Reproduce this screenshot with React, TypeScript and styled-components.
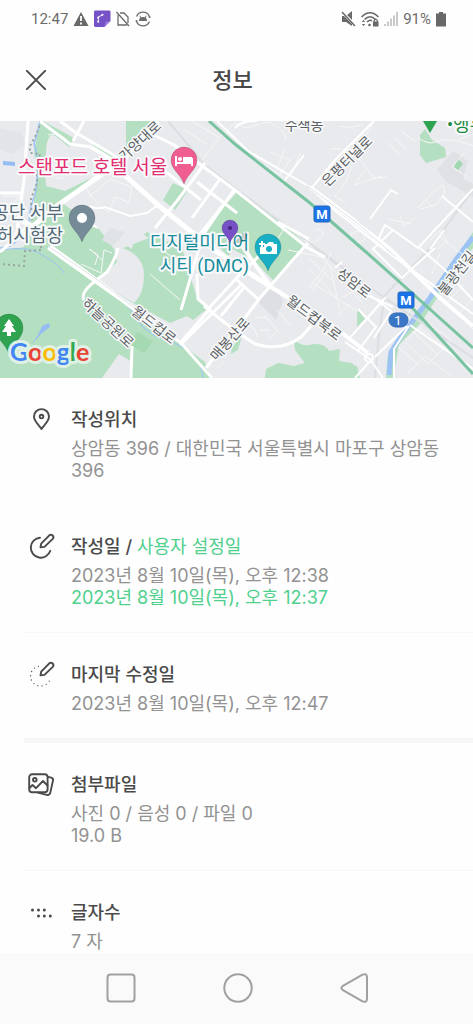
import React from "react";
import styled, { createGlobalStyle } from "styled-components";

const GlobalStyle = createGlobalStyle`
  * { box-sizing: border-box; }
  body {
    margin: 0;
    background: #fefefe;
    font-family: Inter, "Noto Sans CJK KR", sans-serif;
    color: #4a4a4a;
  }
`;

const Screen = styled.div`
  display: flex;
  flex-direction: column;
  min-height: 100vh;
`;

const StatusBar = styled.div`
  display: flex;
  align-items: center;
  justify-content: space-between;
  height: 38px;
  padding: 0 27px 0 31px;
  font: 400 15px/20px Roboto, sans-serif;
  color: #6c6c6c;
`;

const StatusGroup = styled.div<{ $gap: number }>`
  display: flex;
  align-items: center;
  gap: ${(p) => p.$gap}px;
  svg { display: block; }
`;

const TopBar = styled.header`
  display: grid;
  grid-template-columns: 48px 1fr 48px;
  align-items: center;
  height: 83px;
  padding: 0 20px 0 12px;
`;

const CloseButton = styled.button`
  display: flex;
  align-items: center;
  justify-content: center;
  width: 48px;
  height: 48px;
  padding: 0;
  border: 0;
  background: none;
`;

const Title = styled.h1`
  margin: 0;
  text-align: center;
  font-size: 22px;
  line-height: 30px;
  font-weight: 500;
  color: #484848;
`;

const MapView = styled.svg`
  display: block;
  width: 100%;
  height: 257px;
  background: #e8eaed;
`;

const Details = styled.main`
  flex: 1;
  padding-left: 24px;
`;

const Row = styled.section<{ $divider: number }>`
  display: flex;
  gap: 11px;
  padding: 30px 24px 23px 0;
  border-bottom: ${(p) => p.$divider}px solid #f7f7f7;
  &:last-child { padding-bottom: 0; }
`;

const RowIcon = styled.div`
  flex: none;
  width: 36px;
  height: 24px;
  svg { display: block; overflow: visible; }
`;

const RowTitle = styled.h2`
  margin: 0 0 6px;
  font-size: 18px;
  line-height: 24px;
  font-weight: 500;
`;

const Line = styled.p<{ $accent?: boolean }>`
  margin: 0;
  font-size: 18px;
  line-height: 22px;
  color: ${(p) => (p.$accent ? "#4fd08d" : "#929292")};
`;

const Accent = styled.span`
  font-weight: 400;
  color: #4fd08d;
`;

const NavBar = styled.nav`
  display: flex;
  justify-content: center;
  align-items: center;
  gap: 69px;
  height: 71px;
  padding-left: 2px;
  background: #fafafa;
`;

const NavButton = styled.button`
  width: 48px;
  height: 48px;
  padding: 0;
  border: 0;
  background: none;
  svg { display: block; }
`;

const RoadName = styled.text`
  font: 400 14px Roboto, "Noto Sans CJK KR", sans-serif;
  fill: #5b5f63;
  stroke: #f8f9fa;
  stroke-width: 3px;
  stroke-linejoin: round;
  paint-order: stroke;
  text-anchor: middle;
`;

const PlaceName = styled.text<{ $color: string; $size?: number }>`
  font: 400 ${(p) => p.$size ?? 18}px Roboto, "Noto Sans CJK KR", sans-serif;
  fill: ${(p) => p.$color};
  stroke: #f8f9fa;
  stroke-width: 4px;
  stroke-linejoin: round;
  paint-order: stroke;
`;

const MapLogo = styled.text`
  font: 700 25px Lato, sans-serif;
  stroke: #dff1e4;
  stroke-width: 6px;
  stroke-linejoin: round;
  paint-order: stroke;
`;

const roadNames = [
  { name: "가양대로", x: 140, y: 141, turn: -43 },
  { name: "수색동", x: 304, y: 125, turn: 0 },
  { name: "은평터널로", x: 347, y: 161, turn: -45 },
  { name: "불광천길", x: 457, y: 273, turn: -52 },
  { name: "성암로", x: 354, y: 283, turn: 38 },
  { name: "월드컵북로", x: 314, y: 318, turn: 37 },
  { name: "월드컵로", x: 154, y: 325, turn: 38 },
  { name: "하늘공원로", x: 108, y: 323, turn: 43 },
  { name: "매봉산로", x: 230, y: 339, turn: -49 },
];

function MapPin({ x, y, r, color, children }: { x: number; y: number; r: number; color: string; children?: React.ReactNode }) {
  return (
    <g transform={`translate(${x} ${y})`}>
      <path
        d={`M${-r} 0A${r} ${r} 0 1 1 ${r} 0C${r} ${r * 0.75} ${r * 0.3} ${r} 0 ${r * 1.85}C${-r * 0.3} ${r} ${-r} ${r * 0.75} ${-r} 0Z`}
        fill={color}
        stroke="#0002"
      />
      {children}
    </g>
  );
}

function LocationMap() {
  return (
    <MapView viewBox="0 121 473 257" preserveAspectRatio="xMidYMid slice" role="img" aria-label="지도">
      <g fill="#b4dfc1">
        <path d="M43 121L74 138L69 147L53 134Q47 136 46 150L45 170L46 186L65 191L91 178L62 203L97 228L132 249L133 243L147 232L182 248L190 275L197 298L207 309L193 320L187 316L170 323L133 303L97 281L182 345L205 362L210 378H0V251L24 247L32 215L37 180L34 150L41 121Z" />
        <path d="M126 121H157L130 151L115 165L110 162L126 148Z" />
        <path d="M93 145L119 158L115 163L91 148Z" />
        <path d="M173 183L188 190L175 210L163 200Z" />
        <path d="M238 191L278 220L305 243L275 282L253 260L206 235L205 228Z" />
        <path d="M206 234L217 219L240 240L228 256Z" />
        <path d="M420 135L425 129L432 140L445 148L446 157L426 163L420 155Z" />
        <path d="M265 378L266 369L278 363L294 366L312 361L323 361L357 366L360 378Z" />
        <path d="M294 340Q304 348 313 344Q325 343 329 351L340 349L339 361L352 363L358 370L340 377L310 370L295 350Z" />
        <path d="M232 347L242 336L238 350L231 354Z" />
        <path d="M357 309L365 319L357 327Z" />
        <path d="M386 378L388 354L409 326L435 290L460 252L473 232V248L441 292L420 324L399 345L393 378Z" />
      </g>
      <path d="M437 170L453 151L468 161L463 179L473 184V197L447 182Z" fill="#dfe1e5" />
      <path d="M454 167L458 159L463 164L458 170Z" fill="#9fd8b0" />
      <path d="M0 128L22 133L25 145L12 154L0 150Z" fill="#e2e4e8" />
      <path d="M123 248Q144 256 144 275T134 303L97 281L117 262L114 249L99 229L114 215L149 238Z" fill="#e8eaed" />
      <path d="M119 354L102 378H130L132 362Z" fill="#e8eaed" />
      <path d="M137 332L153 341L144 353L130 345Z" fill="#a5d9b2" />
      <path d="M256 300L275 286L283 301L276 320Z" fill="#dddfe4" />
      <path d="M110 228L125 232L113 246L102 240Z" fill="#e0e3e6" />

      {/* rivers */}
      <g fill="none" stroke="#9dc3f5">
        <path d="M40 121Q37 135 34 144C38 155 39 175 35 195Q30 205 29 222L28 233L10 246L0 248" strokeWidth="1.5" />
        <path d="M0 250Q30 245 44 256Q57 263 64 273M128 305Q140 333 166 340Q202 352 203 378" />
        <path d="M389 375L391 352L402 335L430 298L455 261L473 237" strokeWidth="5" />
      </g>
      <path d="M3 161L15 162V166L3 165Z M42 326L49 323L50 327L41 334L31 345L38 335Z" fill="#96bcf4" />
      <path d="M41 121L37 133L30 146V153L40 154L37 165V183L31 199L32 225L42 250L25 251L24 266L0 264" fill="none" stroke="#98a69f" strokeWidth="2" strokeDasharray="2 3" />

      {/* railways under the roads */}
      <g fill="none" stroke="#dcdee1" strokeWidth="2">
        <path d="M168 121L205 165L235 188L281 222L375 291L473 358" />
        <path d="M473 190L430 248L385 295L379 335L375 378" />
        <path d="M310 245L348 272" />
      </g>

      {/* narrow streets */}
      <g fill="none" stroke="#f6f7f8" strokeWidth="1">
        <path d="M48 135Q60 130 70 144M55 178H65M88 198L110 179L132 187L129 203L116 197L108 212M86 188Q95 203 108 212" />
        <path d="M81 264L101 273L104 250L112 253M89 249L98 255L95 265M90 249L102 260" />
        <path d="M185 130L207 144M192 121L220 138M202 160L224 132M228 130Q235 118 245 128L268 122Q285 128 286 140M240 150L280 175L290 160L270 152M280 170L283 181M300 153L292 174M285 149L277 169" />
        <path d="M330 149Q352 146 362 162L374 178L387 177M362 143L374 121M352 165Q347 185 335 196L346 203M367 168L354 185L382 176M418 138Q429 145 435 142Q450 136 473 146M458 140L473 134M464 153L452 167L466 176" />
        <path d="M418 208L432 193L443 185L445 193L436 205L420 209M425 199L432 207M400 215L404 226L415 218M388 219L412 224" />
        <path d="M315 231Q325 225 322 236Q315 246 306 239M350 234Q364 227 365 239Q355 248 350 234M430 240L440 231L447 241L438 249M439 236L462 254" />
        <path d="M331 252L324 269L309 288M309 258L334 282M309 269L337 298M312 290L328 270M330 265L340 311M311 282L358 312M342 298L352 292L363 303M350 304L337 316" />
        <path d="M405 340L427 322L451 340L428 364L405 342M412 331L438 355M419 327L445 348M398 347L420 366M407 374L425 356L451 376M432 290L473 329M447 303L465 283M458 315L473 299" />
        <path d="M255 318L266 317L278 331L269 339M260 330L270 330M277 310L291 326M243 326Q255 322 257 337M209 361L223 344M217 369L224 361M156 245L185 267M150 274L180 300" />
        <path d="M340 126Q350 129 363 124M388 142L400 155M395 138L406 149M402 132L416 142M0 238L27 241M11 239L25 218M2 196H21M6 210L22 195" />
        <path d="M288 250L326 258M305 240L346 283M440 253L432 274M277 240L284 229" />
      </g>

      {/* streets */}
      <g fill="none" stroke="#fff" strokeWidth="2" strokeLinejoin="round">
        <path d="M22 193H0M73 141L84 121M60 121L75 132L120 159" strokeWidth="3" />
        <path d="M28 121L24 180L16 238L0 252M40 121L70 144L91 147" strokeWidth="3" />
        <path d="M118 248Q116 258 107 272L94 282Q80 293 84 300M132 346L131 378M48 248L135 310L181 343L212 378" strokeWidth="3" />
        <path d="M150 133L174 145L235 190L308 248L325 257M205 163L177 201L155 228M220 179L192 218M235 190L205 228L190 246M197 182L237 213M160 167L201 200M278 222L309 239" strokeWidth="3" />
        <path d="M234 190L203 235L181 310M235 280L263 252M180 345L241 285M209 308L244 270M221 316L245 286M206 368L260 298L290 263L308 243M204 306Q233 330 255 344Q281 352 301 337L319 317M197 274L198 299L210 309L180 343M235 278L258 299" strokeWidth="3" />
        <path d="M217 121L248 151L310 187L333 209L390 254L473 314M235 128Q242 120 257 121M304 155L282 184" />
        <path d="M310 190L335 160L374 121M317 191L353 218L386 250M370 219L391 190L398 194M373 249L393 230L418 248L473 189M420 248L444 269L473 300M442 196L473 222M378 240L385 225L412 243" />
        <path d="M372 248L402 278L409 271L435 248M430 249L444 230M335 268L342 262M348 340L386 297M358 309L376 327L358 351M370 295L391 311L374 338M354 289L393 307M345 342L370 359L383 378M409 326L394 349V378M410 325L473 369M375 357L407 326M355 378L372 359" />
      </g>
      <g fill="none" stroke="#fff" strokeWidth="5">
        <path d="M158 121L121 161L58 205L20 237M110 162L158 205L214 250L271 287" />
        <path d="M240 243L271 287M91 147L119 164M50 246L98 281L142 315M368 353L330 324L271 287M310 187L390 249L440 298L473 326" strokeWidth="4" />
        <circle cx="369" cy="358" r="4" strokeWidth="2" />
        <path d="M23 221L30 225L15 240" />
      </g>
      <path d="M48 246L95 278L141 313M306 185L357 223L396 257" fill="none" stroke="#dfe2e5" strokeWidth="1" />
      <path d="M90 206Q96 210 105 207L130 216L147 213L158 205M97 228L78 210L94 227" fill="none" stroke="#fff" strokeWidth="2" />

      {/* underground lines */}
      <path d="M209 121L236 145L310 203L366 252L412 293L473 348M406 301L473 374" fill="none" stroke="#78c3a1" strokeWidth="3" />

      {roadNames.map((r) => (
        <RoadName key={r.name} transform={`translate(${r.x} ${r.y}) rotate(${r.turn})`} y="5">
          {r.name}
        </RoadName>
      ))}

      <PlaceName $color="#e32d70" $size={19} x="18" y="174">스탠포드 호텔 서울</PlaceName>
      <PlaceName $color="#526a77" x="63" y="219" textAnchor="end">공단 서부</PlaceName>
      <PlaceName $color="#526a77" x="63" y="242" textAnchor="end">허시험장</PlaceName>
      <PlaceName $color="#178c9b" x="249" y="249" textAnchor="end">디지털미디어</PlaceName>
      <PlaceName $color="#178c9b" x="249" y="272" textAnchor="end">시티 (DMC)</PlaceName>
      <PlaceName $color="#198a3b" x="447" y="131">•앵무</PlaceName>

      <MapPin x={184} y={160} r={13} color="#ef5d91">
        <path d="M-8 -4V6M8 -2V6M-8 3H8" stroke="#fff" strokeWidth="2" />
        <path d="M-1 -3H8V3H-1Z" fill="#fff" />
        <circle cx="-4" cy="-1" r="2" fill="#fff" />
      </MapPin>
      <MapPin x={82} y={218} r={13} color="#758b98">
        <circle r="5" fill="#fff" />
      </MapPin>
      <MapPin x={268} y={247} r={13} color="#18afc5">
        <path d="M-4 -3H-1L1 -5H5L6 -3H9V7H-8V0H-4Z M-7 -6H-5V-4H-3V-2H-5V0H-7V-2H-9V-4H-7Z" fill="#fff" />
        <circle cx="1" cy="2" r="3" fill="#18afc5" />
      </MapPin>
      <MapPin x={9} y={328} r={14} color="#2fa34f">
        <path d="M0 -9L5 -2H3L7 4H2V8H-2V4H-7L-3 -2H-5Z" fill="#fff" />
      </MapPin>
      <path d="M423 121H437L430 133Z" fill="#2fa34f" />
      <path d="M232 244L246 231Q252 242 232 244" fill="#0002" />
      <MapPin x={230} y={228} r={8} color="#7650c5">
        <circle r="2" fill="#3d247d" />
      </MapPin>

      {[[322, 214], [406, 300]].map(([x, y]) => (
        <g key={x} transform={`translate(${x} ${y})`}>
          <rect x="-8" y="-8" width="16" height="16" rx="2" fill="#1a73e8" stroke="#2768bd" />
          <text y="5" textAnchor="middle" fill="#fff" fontFamily="Roboto, sans-serif" fontSize="13" fontWeight="700">M</text>
        </g>
      ))}
      <rect x="389" y="313" width="19" height="14" rx="7" fill="#3976c5" stroke="#316bb5" />
      <text x="398" y="325" textAnchor="middle" fill="#fff" fontFamily="Roboto, sans-serif" fontSize="13">1</text>

      <MapLogo x="10" y="361">
        <tspan fill="#4285f4">G</tspan>
        <tspan fill="#ea4335">o</tspan>
        <tspan fill="#fbbc05">o</tspan>
        <tspan fill="#4285f4">g</tspan>
        <tspan fill="#34a853">l</tspan>
        <tspan fill="#ea4335">e</tspan>
      </MapLogo>
    </MapView>
  );
}

const lineProps = { fill: "none", stroke: "#4a4a4a", strokeWidth: 1.9, strokeLinecap: "round", strokeLinejoin: "round" } as const;

const pencil = <path d="M16.5 12.2L17.2 8.6L25.3 .3Q27-1 28.7 .5Q30.2 2.2 28.8 3.9L20.4 11.9Z" />;

const PinIcon = () => (
  <svg width="36" height="24" viewBox="0 0 36 24" {...lineProps}>
    <path d="M17.5 21C16 18 10 13.8 10 8.6A7.5 7.5 0 0 1 25 8.6C25 13.8 19 18 17.5 21Z" />
    <circle cx="17.5" cy="8.6" r="1.8" />
  </svg>
);

const WriteIcon = () => (
  <svg width="36" height="24" viewBox="0 0 36 24" {...lineProps}>
    {pencil}
    <path d="M16 2.7A10 10 0 1 0 26.3 15.8" />
  </svg>
);

const EditedIcon = () => (
  <svg width="36" height="24" viewBox="0 0 36 24" {...lineProps}>
    {pencil}
    <path d="M14.5 3.3A10 10 0 1 0 26.3 15.3" strokeWidth="1.3" strokeDasharray="0 4.4" />
  </svg>
);

const PhotosIcon = () => (
  <svg width="36" height="24" viewBox="0 0 36 24" {...lineProps}>
    <rect x="5.2" y="1.3" width="18.4" height="18" rx="3" />
    <circle cx="10.8" cy="6.8" r="1.8" />
    <path d="M5.5 15L8.5 12L12 15.2L19 8L23.5 12.5M24 3.8L27.3 4.6Q29.5 5.4 29 7.5L26.3 19.6Q25.6 22.5 22.6 21.9L14 19.7" />
  </svg>
);

const DotsIcon = () => (
  <svg width="36" height="24" viewBox="0 0 36 24" fill="#4a4a4a">
    {[[8.5, 9], [14.5, 9], [20.3, 9], [14.5, 15], [20.3, 15], [26.3, 15]].map(([x, y]) => (
      <circle key={`${x}-${y}`} cx={x} cy={y} r="1.5" />
    ))}
  </svg>
);

type Item = {
  icon: React.ReactNode;
  title: React.ReactNode;
  lines: { text: string; accent?: boolean }[];
  divider: number;
};

const items: Item[] = [
  { icon: <PinIcon />, title: "작성위치", lines: [{ text: "상암동 396 / 대한민국 서울특별시 마포구 상암동 396" }], divider: 0 },
  {
    icon: <WriteIcon />,
    title: <>작성일 / <Accent>사용자 설정일</Accent></>,
    lines: [{ text: "2023년 8월 10일(목), 오후 12:38" }, { text: "2023년 8월 10일(목), 오후 12:37", accent: true }],
    divider: 1,
  },
  { icon: <EditedIcon />, title: "마지막 수정일", lines: [{ text: "2023년 8월 10일(목), 오후 12:47" }], divider: 5 },
  { icon: <PhotosIcon />, title: "첨부파일", lines: [{ text: "사진 0 / 음성 0 / 파일 0" }, { text: "19.0 B" }], divider: 1 },
  { icon: <DotsIcon />, title: "글자수", lines: [{ text: "7 자" }], divider: 0 },
];

const navProps = { width: 48, height: 48, viewBox: "0 0 48 48", fill: "none", stroke: "#a0a0a0", strokeWidth: 2, strokeLinejoin: "round" } as const;

export default function App() {
  return (
    <Screen>
      <GlobalStyle />
      <StatusBar>
        <StatusGroup $gap={5}>
          <span>12:47</span>
          <svg width="16" height="16" viewBox="0 0 16 16">
            <path d="M8 1L15.5 15H.5Z" fill="#686868" />
            <path d="M8 5V10M8 11.5V13.5" stroke="#fff" strokeWidth="1.8" />
          </svg>
          <svg width="17" height="18" viewBox="0 0 18 18">
            <path d="M1.5 0H16Q17.5 0 17.5 1.5V11L11 17.5H1.5Q0 17.5 0 16V1.5Q0 0 1.5 0Z" fill="#7552c6" />
            <path d="M17.5 11L11 17.5L12.5 12Z" fill="#9b82d8" />
            <path d="M4.5 12V7L9 4.5" fill="none" stroke="#fff" />
            <g fill="#fff"><circle cx="4.5" cy="12" r="1.1" /><circle cx="4.5" cy="7.5" r="1.1" /><circle cx="9" cy="4.5" r="1.1" /></g>
          </svg>
          <svg width="14" height="16" viewBox="0 0 14 16" fill="none" stroke="#6c6c6c" strokeWidth="1.3">
            <path d="M2 4V14H11M4 2H8L12 6V12M.5 1L13 15" />
          </svg>
          <svg width="16" height="16" viewBox="0 0 16 16" fill="none" stroke="#6c6c6c" strokeWidth="1.3">
            <path d="M1.5 5.5A7 7 0 0 1 14.5 5.5M14.5 10.5A7 7 0 0 1 1.5 10.5" />
            <circle cx="14.5" cy="6" r="1" fill="#6c6c6c" stroke="none" />
            <circle cx="1.5" cy="10" r="1" fill="#6c6c6c" stroke="none" />
            <path d="M4 10A4 4 0 0 1 12 10Z" fill="#6c6c6c" stroke="none" />
            <path d="M4.8 4.8L6 7M11.2 4.8L10 7" strokeWidth="1" />
          </svg>
        </StatusGroup>
        <StatusGroup $gap={5}>
          <svg width="15" height="16" viewBox="0 0 15 16">
            <path d="M1 5H5L11 0V15L5 11H1Z" fill="#686868" />
            <path d="M0 0L15 15" stroke="#fff" strokeWidth="3" />
            <path d="M1 1L14 15" stroke="#686868" strokeWidth="1.5" />
          </svg>
          <svg width="18" height="16" viewBox="0 0 18 16" fill="none" stroke="#686868" strokeWidth="1.5">
            <path d="M.5 6Q9-2.5 17.5 6M3.5 8.5Q9 3 14.5 8.5M6 11Q9 8 11 10" />
            <path d="M.8 11L2.5 9L4.2 11ZM.8 13L2.5 15L4.2 13Z" fill="#686868" stroke="none" />
            <path d="M12 10.5H17.5V15.5H12Z" fill="#686868" stroke="none" />
            <path d="M13.2 11V9.3Q14.8 7.5 16.3 9.3V11" strokeWidth="1.1" />
            <circle cx="8.5" cy="14" r="1.3" fill="#686868" stroke="none" />
          </svg>
          <svg width="14" height="16" viewBox="0 0 14 16" fill="none" stroke="#c9c9c9" strokeWidth="2">
            <path d="M1 15V13M4 15V10.5M7 15V7.5M10 15V4.5M13 15V1" />
          </svg>
          <span>91%</span>
          <svg width="10" height="15" viewBox="0 0 10 15">
            <path d="M3 0H7V1.5H10V14.5H0V1.5H3Z" fill="#686868" />
          </svg>
        </StatusGroup>
      </StatusBar>

      <TopBar>
        <CloseButton type="button" aria-label="닫기">
          <svg width="20" height="20" viewBox="0 0 20 20" {...lineProps} strokeWidth="2">
            <path d="M.9 .9L19.1 19.1M19.1 .9L.9 19.1" />
          </svg>
        </CloseButton>
        <Title>정보</Title>
      </TopBar>

      <LocationMap />

      <Details>
        {items.map((item, i) => (
          <Row key={i} $divider={item.divider}>
            <RowIcon>{item.icon}</RowIcon>
            <div>
              <RowTitle>{item.title}</RowTitle>
              {item.lines.map((line) => (
                <Line key={line.text} $accent={line.accent}>{line.text}</Line>
              ))}
            </div>
          </Row>
        ))}
      </Details>

      <NavBar>
        <NavButton type="button" aria-label="최근 앱">
          <svg {...navProps}><rect x="10.5" y="9.5" width="27" height="27" rx="3" /></svg>
        </NavButton>
        <NavButton type="button" aria-label="홈">
          <svg {...navProps}><circle cx="24" cy="23" r="13.7" /></svg>
        </NavButton>
        <NavButton type="button" aria-label="뒤로">
          <svg {...navProps}><path d="M11.5 21.2L31.5 9.6Q35.8 8.1 36 12V34Q35.8 37.9 31.5 36.4L11.5 24.8Q9.2 23 11.5 21.2Z" /></svg>
        </NavButton>
      </NavBar>
    </Screen>
  );
}
